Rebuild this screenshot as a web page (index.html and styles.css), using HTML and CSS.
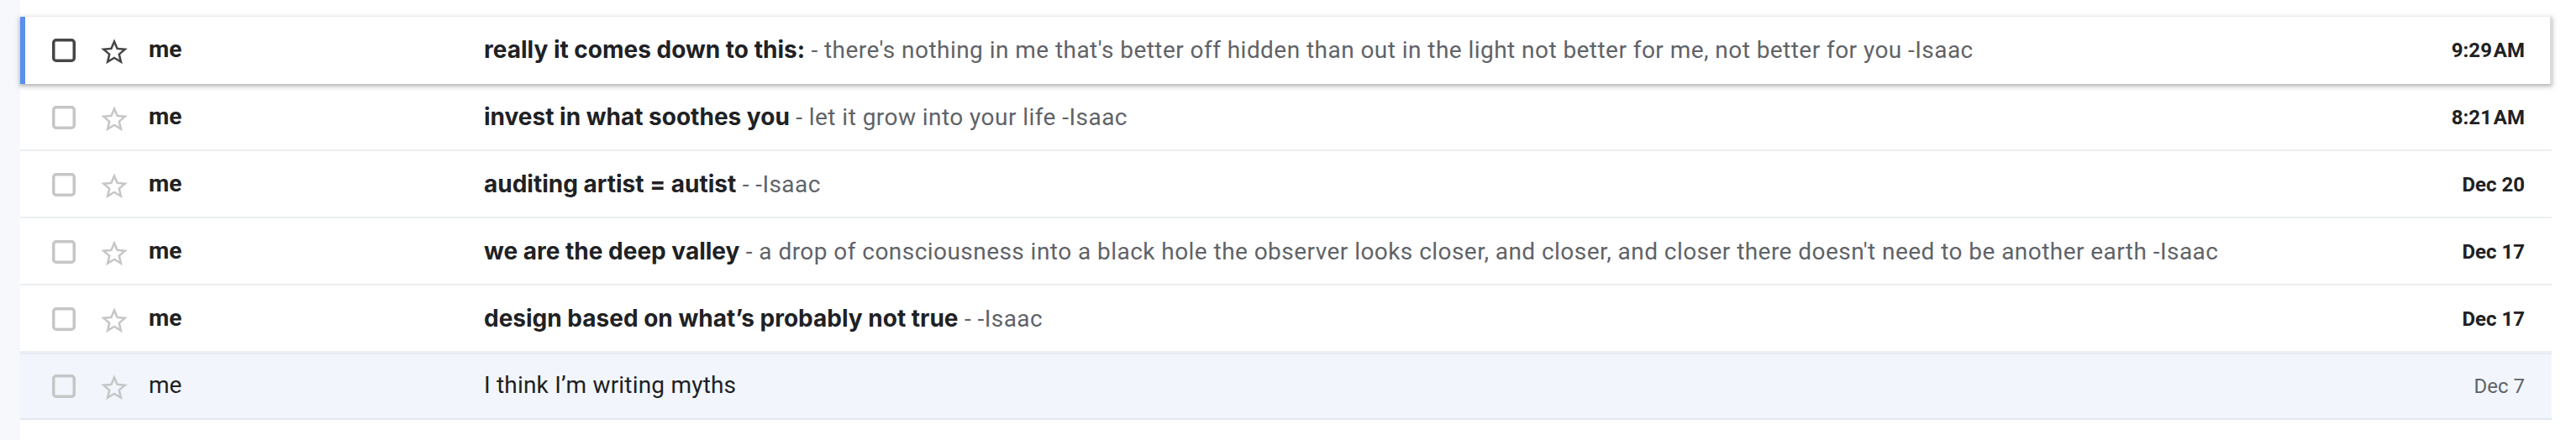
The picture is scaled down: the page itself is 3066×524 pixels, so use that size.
FILE: index.html
```html
<!DOCTYPE html>
<html>
<head>
<meta charset="utf-8">
<link rel="stylesheet" href="styles.css">
</head>
<body>
<div class="page">
  <div class="gutter"></div>
  <div class="list">
    <div class="row unread hover">
      <span class="cb"><svg viewBox="0 0 28 28" width="28" height="28"><rect x="1.75" y="1.75" width="24.5" height="24.5" rx="3" ry="3" fill="none" stroke="currentColor" stroke-width="3.5"/></svg></span>
      <span class="star"><svg viewBox="0 0 24 24" width="38" height="38"><path fill="currentColor" d="M22 9.24l-7.19-.62L12 2 9.19 8.63 2 9.24l5.46 4.73L5.82 21 12 17.27 18.18 21l-1.63-7.03L22 9.24zM12 15.4l-3.76 2.27 1-4.28-3.32-2.88 4.38-.38L12 6.1l1.71 4.04 4.38.38-3.32 2.88 1 4.28L12 15.4z"/></svg></span>
      <span class="sender">me</span>
      <span class="content"><span class="subject">really it comes down to this:</span><span class="snippet"> - there's nothing in me that's better off hidden than out in the light not better for me, not better for you -Isaac</span></span>
      <span class="date time">9:29 AM</span>
    </div>
    <div class="row unread">
      <span class="cb"><svg viewBox="0 0 28 28" width="28" height="28"><rect x="1.75" y="1.75" width="24.5" height="24.5" rx="3" ry="3" fill="none" stroke="currentColor" stroke-width="3.5"/></svg></span>
      <span class="star"><svg viewBox="0 0 24 24" width="38" height="38"><path fill="currentColor" d="M22 9.24l-7.19-.62L12 2 9.19 8.63 2 9.24l5.46 4.73L5.82 21 12 17.27 18.18 21l-1.63-7.03L22 9.24zM12 15.4l-3.76 2.27 1-4.28-3.32-2.88 4.38-.38L12 6.1l1.71 4.04 4.38.38-3.32 2.88 1 4.28L12 15.4z"/></svg></span>
      <span class="sender">me</span>
      <span class="content"><span class="subject">invest in what soothes you</span><span class="snippet"> - let it grow into your life -Isaac</span></span>
      <span class="date time">8:21 AM</span>
    </div>
    <div class="row unread">
      <span class="cb"><svg viewBox="0 0 28 28" width="28" height="28"><rect x="1.75" y="1.75" width="24.5" height="24.5" rx="3" ry="3" fill="none" stroke="currentColor" stroke-width="3.5"/></svg></span>
      <span class="star"><svg viewBox="0 0 24 24" width="38" height="38"><path fill="currentColor" d="M22 9.24l-7.19-.62L12 2 9.19 8.63 2 9.24l5.46 4.73L5.82 21 12 17.27 18.18 21l-1.63-7.03L22 9.24zM12 15.4l-3.76 2.27 1-4.28-3.32-2.88 4.38-.38L12 6.1l1.71 4.04 4.38.38-3.32 2.88 1 4.28L12 15.4z"/></svg></span>
      <span class="sender">me</span>
      <span class="content"><span class="subject">auditing artist = autist</span><span class="snippet"> - -Isaac</span></span>
      <span class="date">Dec 20</span>
    </div>
    <div class="row unread">
      <span class="cb"><svg viewBox="0 0 28 28" width="28" height="28"><rect x="1.75" y="1.75" width="24.5" height="24.5" rx="3" ry="3" fill="none" stroke="currentColor" stroke-width="3.5"/></svg></span>
      <span class="star"><svg viewBox="0 0 24 24" width="38" height="38"><path fill="currentColor" d="M22 9.24l-7.19-.62L12 2 9.19 8.63 2 9.24l5.46 4.73L5.82 21 12 17.27 18.18 21l-1.63-7.03L22 9.24zM12 15.4l-3.76 2.27 1-4.28-3.32-2.88 4.38-.38L12 6.1l1.71 4.04 4.38.38-3.32 2.88 1 4.28L12 15.4z"/></svg></span>
      <span class="sender">me</span>
      <span class="content"><span class="subject">we are the deep valley</span><span class="snippet"> - a drop of consciousness into a black hole the observer looks closer, and closer, and closer there doesn't need to be another earth -Isaac</span></span>
      <span class="date">Dec 17</span>
    </div>
    <div class="row unread">
      <span class="cb"><svg viewBox="0 0 28 28" width="28" height="28"><rect x="1.75" y="1.75" width="24.5" height="24.5" rx="3" ry="3" fill="none" stroke="currentColor" stroke-width="3.5"/></svg></span>
      <span class="star"><svg viewBox="0 0 24 24" width="38" height="38"><path fill="currentColor" d="M22 9.24l-7.19-.62L12 2 9.19 8.63 2 9.24l5.46 4.73L5.82 21 12 17.27 18.18 21l-1.63-7.03L22 9.24zM12 15.4l-3.76 2.27 1-4.28-3.32-2.88 4.38-.38L12 6.1l1.71 4.04 4.38.38-3.32 2.88 1 4.28L12 15.4z"/></svg></span>
      <span class="sender">me</span>
      <span class="content"><span class="subject">design based on what’s probably not true</span><span class="snippet"> - -Isaac</span></span>
      <span class="date">Dec 17</span>
    </div>
    <div class="row read">
      <span class="cb"><svg viewBox="0 0 28 28" width="28" height="28"><rect x="1.75" y="1.75" width="24.5" height="24.5" rx="3" ry="3" fill="none" stroke="currentColor" stroke-width="3.5"/></svg></span>
      <span class="star"><svg viewBox="0 0 24 24" width="38" height="38"><path fill="currentColor" d="M22 9.24l-7.19-.62L12 2 9.19 8.63 2 9.24l5.46 4.73L5.82 21 12 17.27 18.18 21l-1.63-7.03L22 9.24zM12 15.4l-3.76 2.27 1-4.28-3.32-2.88 4.38-.38L12 6.1l1.71 4.04 4.38.38-3.32 2.88 1 4.28L12 15.4z"/></svg></span>
      <span class="sender">me</span>
      <span class="content"><span class="subject">I think I’m writing myths</span></span>
      <span class="date">Dec 7</span>
    </div>
  </div>
</div>
</body>
</html>
```
FILE: styles.css
```css
html, body {
  margin: 0;
  padding: 0;
  background: #ffffff;
}
body {
  font-family: Roboto, "Liberation Sans", Arial, sans-serif;
  color: #202124;
}
.page {
  display: flex;
  height: 524px;
}
.gutter {
  width: 24px;
  flex: none;
  background: #f6f8fc;
}
.list {
  width: 3013px;
  flex: none;
  padding-top: 20px;
  display: flex;
  flex-direction: column;
}
.row {
  display: flex;
  align-items: center;
  height: 80px;
  flex: none;
  padding-left: 38px;
  padding-right: 32px;
  box-shadow: inset 0 -2px 0 0 rgba(100, 121, 143, 0.122);
  background: #ffffff;
  white-space: nowrap;
}
.row.hover {
  position: relative;
  z-index: 2;
  box-shadow: inset 6px 0 0 0 #5a8eee, inset -2px 0 0 #dadce0, 0 2px 4px 0 rgba(60, 64, 67, 0.3), 0 2px 6px 2px rgba(60, 64, 67, 0.15);
}
.row.read {
  background: #f2f6fc;
  box-shadow: inset 0 -2px 0 0 rgba(100, 121, 143, 0.122), inset 0 2px 0 0 rgba(100, 121, 143, 0.08);
}
.cb {
  width: 28px;
  height: 28px;
  flex: none;
  color: #c4c7c5;
  display: flex;
}
.star {
  width: 38px;
  height: 38px;
  flex: none;
  margin-left: 27px;
  margin-top: 4px;
  color: #c4c7c5;
  display: flex;
}
.hover .cb, .hover .star {
  color: #444746;
}
.sender {
  margin-left: 22px;
  margin-bottom: 3px;
  width: 399px;
  flex: none;
  font-size: 28px;
}
.content {
  flex: 1;
  min-width: 0;
  overflow: hidden;
  margin-bottom: 3px;
  font-size: 28px;
}
.subject {
  color: #202124;
  letter-spacing: 0.2px;
}
.snippet {
  color: #5f6368;
  letter-spacing: 0.45px;
}
.date {
  flex: none;
  margin-left: 40px;
  font-size: 24px;
  color: #5f6368;
}
.time {
  word-spacing: -4px;
}
.unread .sender, .unread .subject, .unread .date {
  font-weight: 700;
  color: #202124;
}
.unread .subject {
  font-family: Inter, Roboto, sans-serif;
  font-size: 28px;
  letter-spacing: 0;
}
```
